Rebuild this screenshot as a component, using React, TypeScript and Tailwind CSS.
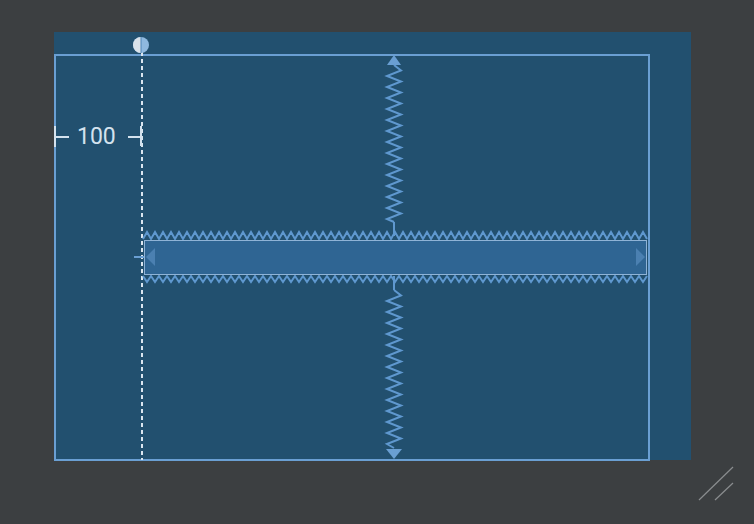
const LINE = "#6a9fd3";
const ZIG = "#5f98cf";

function hZig(x0: number, x1: number, yTop: number, yBot: number, step: number, startTop: boolean) {
  let d = `M${x0} ${startTop ? yTop : yBot}`;
  let up = !startTop;
  for (let x = x0 + step / 2; x <= x1; x += step / 2) {
    d += ` L${x} ${up ? yTop : yBot}`;
    up = !up;
  }
  return d;
}

function vZig(y0: number, y1: number, cx: number, amp: number, step: number) {
  let d = `M${cx} ${y0}`;
  let right = true;
  for (let y = y0 + step / 2; y < y1; y += step / 2) {
    d += ` L${cx + (right ? amp : -amp)} ${y}`;
    right = !right;
  }
  d += ` L${cx} ${y1}`;
  return d;
}

export default function App() {
  return (
    <div className="relative w-[754px] h-[524px] bg-[#3c3f41] overflow-hidden" style={{ fontFamily: "Roboto, 'Liberation Sans', sans-serif" }}>
      {/* design surface */}
      <div className="absolute left-[54px] top-[32px] w-[637px] h-[428px] bg-[#22506f]" />
      <div className="absolute left-[54px] top-[54px] w-[596px] h-[407px] border-2 border-[#6a9fd3]" />

      <svg className="absolute inset-0" width={754} height={524}>
        {/* guideline */}
        <line x1={142} y1={52} x2={142} y2={460} stroke="#dbe6f0" strokeWidth={2} strokeDasharray="4 3" />
        <circle cx={141} cy={45} r={8} fill="#8fb9df" />
        <path d="M141 37 A8 8 0 0 0 141 53 Z" fill="#d9e2ea" />
        <line x1={141} y1={37} x2={141} y2={53} stroke="#4f86b8" strokeWidth={1} />

        {/* dimension 100 */}
        <g stroke="#d4e2ee" strokeWidth={2}>
          <line x1={55} y1={126} x2={55} y2={147} />
          <line x1={55} y1={137} x2={69} y2={137} />
          <line x1={128} y1={137} x2={141} y2={137} />
          <line x1={141} y1={126} x2={141} y2={146} />
        </g>

        {/* widget zigzags */}
        <path d={hZig(143, 648, 232, 239, 8, false)} stroke={ZIG} strokeWidth={2} fill="none" />
        <path d={hZig(143, 648, 276, 282, 8, true)} stroke={ZIG} strokeWidth={2} fill="none" />

        {/* widget */}
        <rect x={144.5} y={240.5} width={502} height={34} fill="#2f6593" stroke="#8fb3d6" strokeWidth={1} />
        <line x1={134} y1={257} x2={144} y2={257} stroke={LINE} strokeWidth={2} />
        <path d="M155 248 L146 257 L155 266 Z" fill="#4b80b1" />
        <path d="M636 248 L645 257 L636 266 Z" fill="#4b80b1" />

        {/* vertical springs */}
        <path d="M387 65 L394 55 L401 65 Z" fill={LINE} />
        <path d={vZig(65, 222, 394, 7, 11)} stroke={ZIG} strokeWidth={2} fill="none" />
        <line x1={394} y1={222} x2={394} y2={236} stroke={ZIG} strokeWidth={2} />
        <line x1={394} y1={276} x2={394} y2={290} stroke={ZIG} strokeWidth={2} />
        <path d={vZig(290, 448, 394, 7, 11)} stroke={ZIG} strokeWidth={2} fill="none" />
        <path d="M386 449 L402 449 L394 459 Z" fill={LINE} />

        {/* resize grip */}
        <g stroke="#8a8d8f" strokeWidth={1.2}>
          <line x1={699} y1={500} x2={733} y2={467} />
          <line x1={715} y1={500} x2={733} y2={483} />
        </g>
      </svg>

      <span className="absolute left-[77px] top-[123px] text-[23px] leading-[28px] font-normal text-[#d4e2ee]">100</span>
    </div>
  );
}
